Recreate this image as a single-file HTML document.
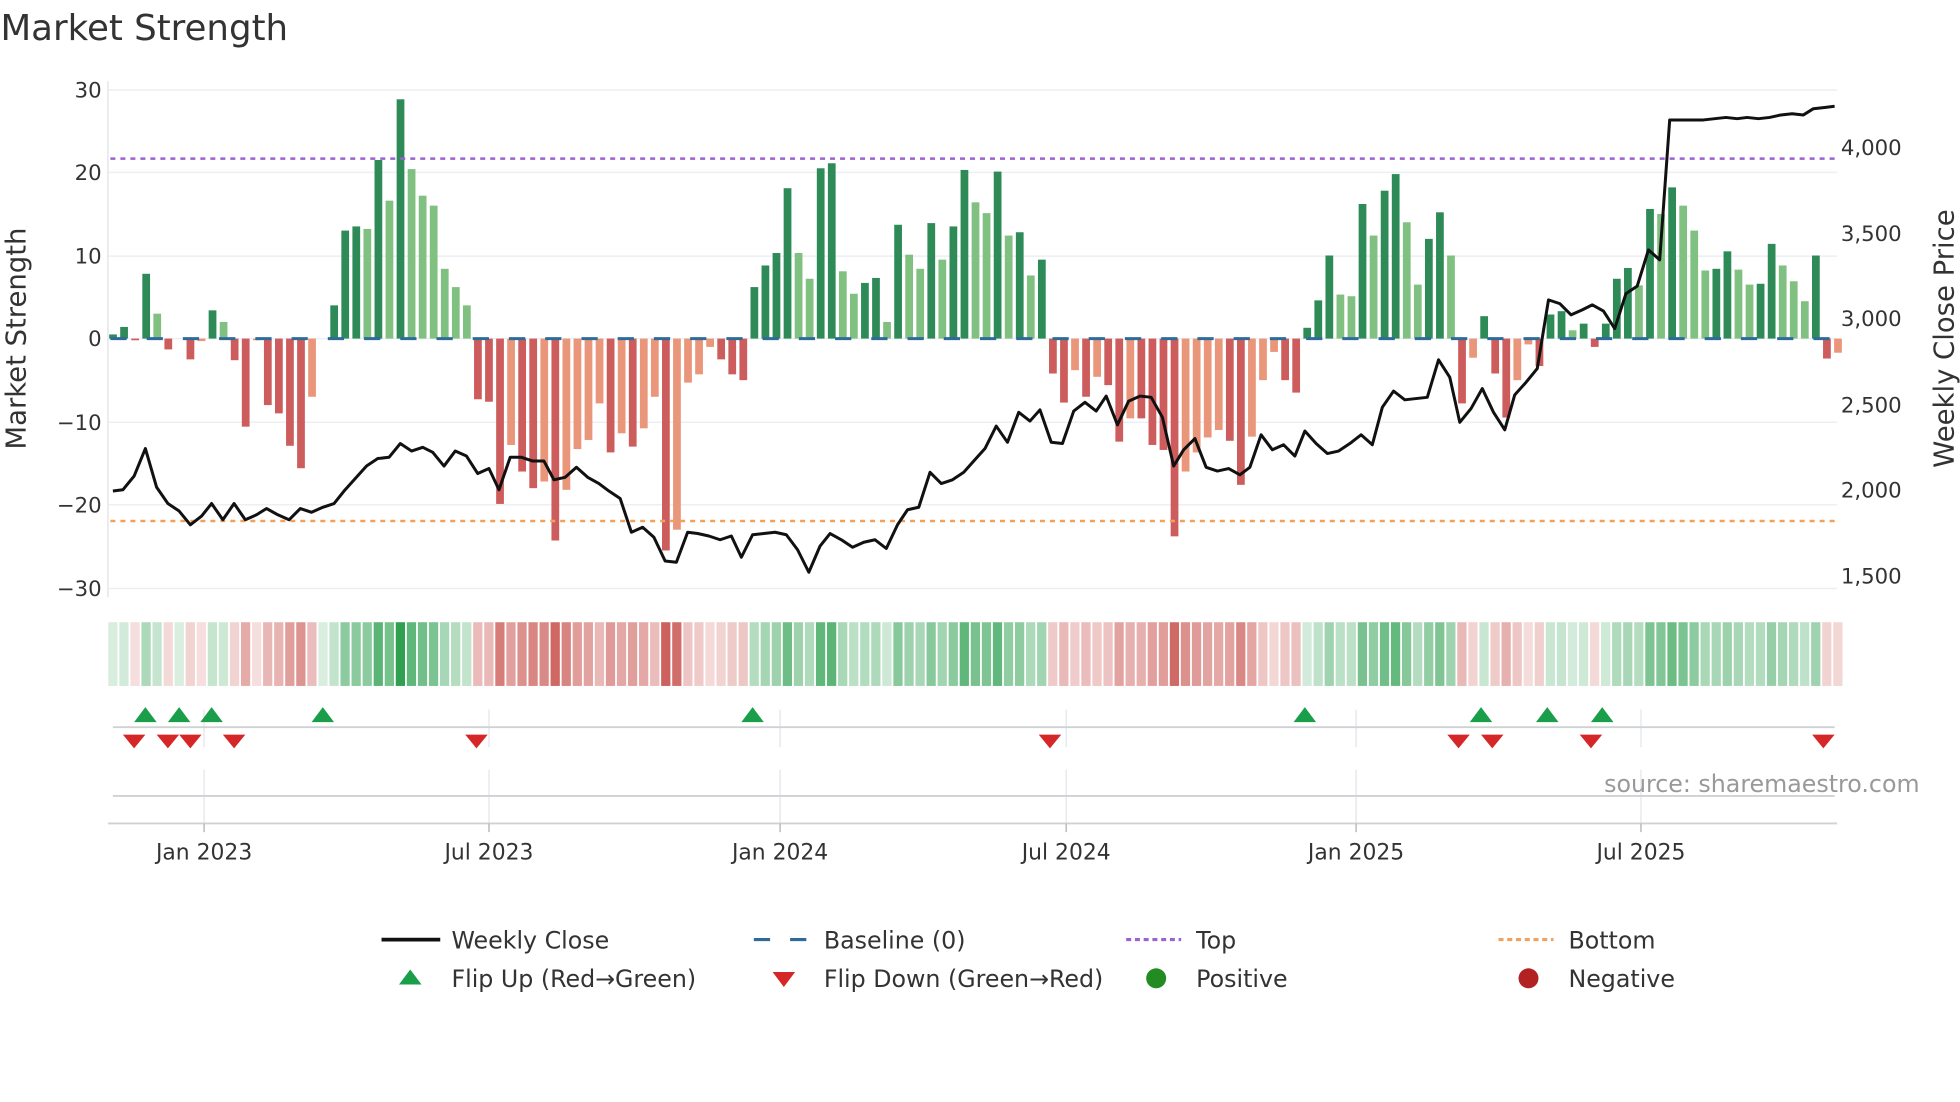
<!DOCTYPE html>
<html><head><meta charset="utf-8"><style>
html,body{margin:0;padding:0;background:#fff;width:1960px;height:1102px;overflow:hidden}
svg{display:block;font-family:"DejaVu Sans","Liberation Sans",sans-serif}
</style></head><body>
<svg id="s" width="1960" height="1102" viewBox="0 0 1568 882" xmlns="http://www.w3.org/2000/svg">
<rect width="1568" height="882" fill="#fff"/>
<text x="0" y="32" font-size="28.5" fill="#333">Market Strength</text>
<g stroke="#eceff3" stroke-width="1.2">
<line x1="86" y1="72" x2="1470" y2="72"/><line x1="86" y1="138" x2="1470" y2="138"/><line x1="86" y1="205" x2="1470" y2="205"/><line x1="86" y1="271" x2="1470" y2="271"/><line x1="86" y1="338" x2="1470" y2="338"/><line x1="86" y1="404" x2="1470" y2="404"/><line x1="86" y1="471" x2="1470" y2="471"/>
</g>
<line x1="86" y1="65" x2="86" y2="478" stroke="#e4e6ea" stroke-width="1.2"/>
<g font-size="17" fill="#333" text-anchor="end">
<text x="81" y="78">30</text><text x="81" y="144">20</text><text x="81" y="211">10</text><text x="81" y="277">0</text><text x="81" y="344">−10</text><text x="81" y="410">−20</text><text x="81" y="477">−30</text>
</g>
<g font-size="17" fill="#333">
<text x="1473" y="124">4,000</text><text x="1473" y="193">3,500</text><text x="1473" y="261">3,000</text><text x="1473" y="330">2,500</text><text x="1473" y="398">2,000</text><text x="1473" y="467">1,500</text>
</g>
<text transform="translate(20,271) rotate(-90)" font-size="22" fill="#333" text-anchor="middle">Market Strength</text>
<text transform="translate(1563,271) rotate(-90)" font-size="22" fill="#333" text-anchor="middle">Weekly Close Price</text>
<g id="bars"></g>
<line x1="88" y1="271" x2="1470" y2="271" stroke="#2f6b9a" stroke-width="2.4" stroke-dasharray="13 16"/>
<line x1="88" y1="127" x2="1470" y2="127" stroke="#9b62d1" stroke-width="2" stroke-dasharray="4 4"/>
<line x1="88" y1="417" x2="1470" y2="417" stroke="#f2a15c" stroke-width="2" stroke-dasharray="4 4"/>
<polyline fill="none" stroke="#111" stroke-width="2.4" stroke-linejoin="round" points="90,393 98,392 107,381 116,359 125,390 134,403 143,409 152,420 161,413 169,403 178,416 187,403 196,416 205,412 213,407 222,412 231,416 240,407 249,410 258,406 267,403 275,393 284,383 293,373 302,367 311,366 320,355 329,361 338,358 346,362 355,373 364,361 373,365 382,379 391,375 399,392 408,366 417,366 426,369 435,369 443,384 452,382 461,374 470,382 479,387 487,393 496,399 505,426 514,422 523,430 532,449 541,450 550,426 558,427 567,429 576,432 585,429 593,446 602,428 611,427 620,426 629,428 638,440 647,458 656,437 664,427 673,432 682,438 691,434 700,432 709,439 718,420 726,408 735,406 744,378 753,387 762,384 771,378 779,369 788,359 797,341 806,354 815,330 824,337 832,328 841,354 850,355 859,329 868,322 877,329 885,317 894,340 903,321 912,317 921,318 930,334 939,373 947,360 956,351 965,374 974,377 983,375 992,380 1000,374 1009,348 1018,360 1027,356 1036,365 1044,345 1053,355 1062,363 1071,361 1080,355 1089,348 1098,356 1106,326 1115,313 1124,320 1133,319 1142,318 1151,288 1160,302 1168,338 1177,327 1186,311 1195,330 1204,344 1212,316 1221,306 1230,295 1239,240 1248,243 1257,252 1266,248 1274,244 1283,249 1292,263 1301,235 1310,229 1319,200 1328,208 1336,96 1345,96 1354,96 1363,96 1372,95 1381,94 1390,95 1398,94 1407,95 1416,94 1425,92 1434,91 1443,92 1451,87 1460,86 1468,85"/>
<g id="heat"></g>
<g stroke="#e6e9ee" stroke-width="1.2">
<line x1="163" y1="568" x2="163" y2="598"/><line x1="391" y1="568" x2="391" y2="598"/><line x1="624" y1="568" x2="624" y2="598"/><line x1="853" y1="568" x2="853" y2="598"/><line x1="1085" y1="568" x2="1085" y2="598"/><line x1="1313" y1="568" x2="1313" y2="598"/>
<line x1="163" y1="616" x2="163" y2="658"/><line x1="391" y1="616" x2="391" y2="658"/><line x1="624" y1="616" x2="624" y2="658"/><line x1="853" y1="616" x2="853" y2="658"/><line x1="1085" y1="616" x2="1085" y2="658"/><line x1="1313" y1="616" x2="1313" y2="658"/>
</g>
<line x1="90" y1="582" x2="1468" y2="582" stroke="#cfd1d4" stroke-width="1.5"/>
<line x1="90" y1="637" x2="1468" y2="637" stroke="#cfd1d4" stroke-width="1.5"/>
<line x1="86" y1="659" x2="1470" y2="659" stroke="#cfd1d4" stroke-width="1.5"/>
<g stroke="#bbb" stroke-width="1.2">
<line x1="163" y1="659" x2="163" y2="666"/><line x1="391" y1="659" x2="391" y2="666"/><line x1="624" y1="659" x2="624" y2="666"/><line x1="853" y1="659" x2="853" y2="666"/><line x1="1085" y1="659" x2="1085" y2="666"/><line x1="1313" y1="659" x2="1313" y2="666"/>
</g>
<g id="mk"></g>
<g font-size="17.5" fill="#333" text-anchor="middle">
<text x="163" y="688">Jan 2023</text><text x="391" y="688">Jul 2023</text><text x="624" y="688">Jan 2024</text><text x="853" y="688">Jul 2024</text><text x="1085" y="688">Jan 2025</text><text x="1313" y="688">Jul 2025</text>
</g>
<text x="1536" y="634" font-size="19" fill="#999" text-anchor="end">source: sharemaestro.com</text>
<g font-size="19" fill="#333">
<line x1="305" y1="752" x2="352" y2="752" stroke="#111" stroke-width="3"/><text x="361" y="759">Weekly Close</text>
<line x1="603" y1="752" x2="647" y2="752" stroke="#2f6b9a" stroke-width="2.5" stroke-dasharray="13 16"/><text x="659" y="759">Baseline (0)</text>
<line x1="901" y1="752" x2="945" y2="752" stroke="#9b62d1" stroke-width="2.5" stroke-dasharray="4 3"/><text x="957" y="759">Top</text>
<line x1="1199" y1="752" x2="1243" y2="752" stroke="#f2a15c" stroke-width="2.5" stroke-dasharray="4 3"/><text x="1255" y="759">Bottom</text>
<polygon points="319,788 337,788 328,776" fill="#1a9e4a"/><text x="361" y="790">Flip Up (Red→Green)</text>
<polygon points="618,778 636,778 627,790" fill="#d62728"/><text x="659" y="790">Flip Down (Green→Red)</text>
<circle cx="925" cy="783" r="8" fill="#228b22"/><text x="957" y="790">Positive</text>
<circle cx="1223" cy="783" r="8" fill="#b22222"/><text x="1255" y="790">Negative</text>
</g>
</svg>
<script>
var v=[0.5,1.4,-0.2,7.8,3,-1.3,0,-2.5,-0.3,3.4,2,-2.6,-10.6,-0.2,-8,-9,-12.9,-15.6,-7,0,4,13,13.5,13.2,21.5,16.6,28.8,20.4,17.2,16,8.4,6.2,4,-7.3,-7.6,-19.9,-12.8,-16,-18,-17.2,-24.3,-18.2,-13.3,-12.2,-7.8,-13.7,-11.4,-13,-10.8,-7,-25.5,-23,-5.3,-4.3,-1,-2.5,-4.3,-5,
6.2,8.8,10.3,18.1,10.3,7.2,20.5,21.1,8.1,5.4,6.7,7.3,2,13.7,10.1,8.4,13.9,9.5,13.5,20.3,16.4,15.1,20.1,12.4,12.8,7.6,9.5,-4.2,-7.7,-3.8,-7,-4.6,-5.6,-12.4,-9.6,-9.6,-12.8,-13.4,-23.8,-16,-13.7,-11.9,-11,-12.3,-17.6,-11.8,-5,-1.6,-5,-6.5,
1.3,4.6,10,5.3,5.1,16.2,12.4,17.8,19.8,14,6.5,12,15.2,10,-7.8,-2.3,2.7,-4.2,-9.5,-5,-0.7,-3.3,2.9,3.3,1,1.8,-1,1.8,7.2,8.5,6.4,15.6,15,18.2,16,13,8.2,8.4,10.5,8.3,6.5,6.6,11.4,8.8,6.9,4.5,10,-2.4,-1.7];
var NS="http://www.w3.org/2000/svg",bars=document.getElementById('bars'),heat=document.getElementById('heat'),mk=document.getElementById('mk');
function el(p,t,a){var e=document.createElementNS(NS,t);for(var k in a)e.setAttribute(k,a[k]);p.appendChild(e);return e;}
for(var i=0;i<v.length;i++){
 var x=90+i*8.85,val=v[i],prev=i?v[i-1]:0,h=Math.abs(val)*6.65,c;
 if(val>=0)c=(val>=prev)?'#2e8b57':'#80c080';else c=(val<=prev)?'#cd5c5c':'#e9967a';
 if(h>0.2)el(bars,'rect',{x:x-3,y:val>=0?271-h:271,width:6.2,height:h,fill:c});
 var a=Math.min(1,0.18+Math.abs(val)/30*0.85);
 var hc=val>=0?'rgba(46,160,80,'+a.toFixed(2)+')':'rgba(200,80,75,'+a.toFixed(2)+')';
 el(heat,'rect',{x:x-3.7,y:498,width:7.4,height:51,fill:hc});
}
[116,143,169,258,602,1044,1185,1238,1282].forEach(function(x){el(mk,'polygon',{points:(x-9)+',578 '+(x+9)+',578 '+x+',566',fill:'#1a9e4a'});});
[107,134,152,187,381,840,1167,1194,1273,1459].forEach(function(x){el(mk,'polygon',{points:(x-9)+',588 '+(x+9)+',588 '+x+',599',fill:'#d62728'});});
</script>
</body></html>
